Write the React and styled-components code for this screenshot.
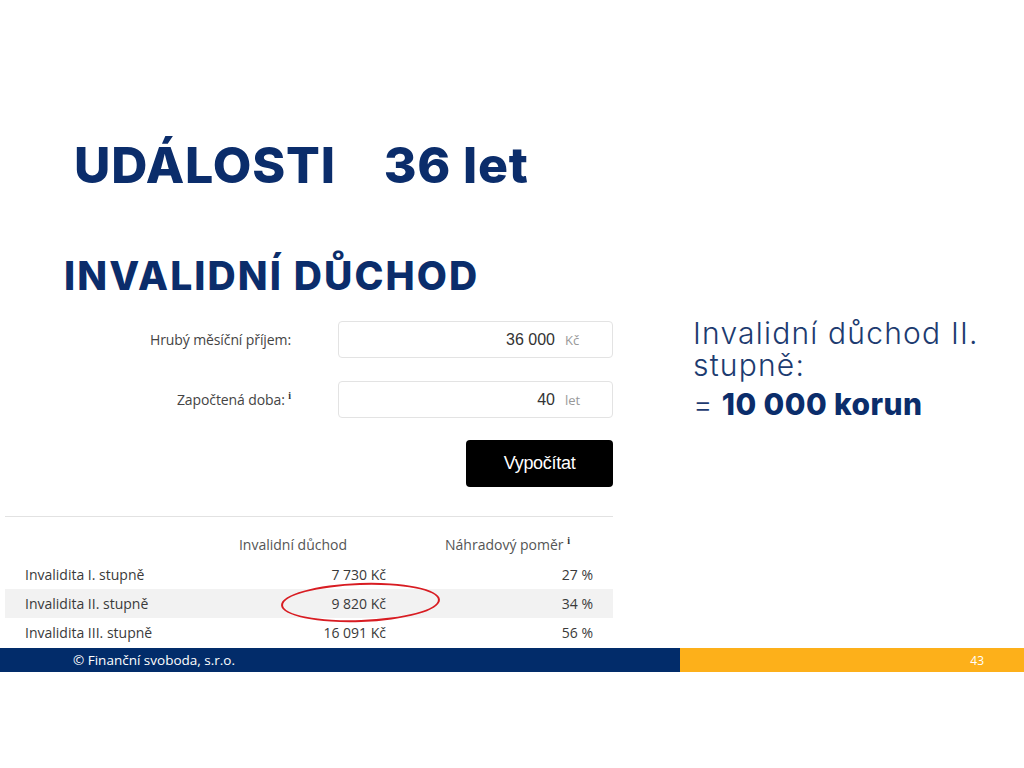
import React from "react";
import styled, { createGlobalStyle } from "styled-components";

const GlobalStyle = createGlobalStyle`
  body {
    margin: 0;
    background: #fff;
  }
`;

const rows = [
  { label: "Invalidita I. stupně", amount: "7 730 Kč", ratio: "27 %" },
  { label: "Invalidita II. stupně", amount: "9 820 Kč", ratio: "34 %", marked: true },
  { label: "Invalidita III. stupně", amount: "16 091 Kč", ratio: "56 %" },
];

const App = () => {
  return (
    <>
      <GlobalStyle />
      <Slide>
        <Title>
          UDÁLOSTI<Gap />36 let
        </Title>
        <Subtitle>INVALIDNÍ DŮCHOD</Subtitle>
        <Main>
          <Calculator>
            <Form>
              <Label>Hrubý měsíční příjem:</Label>
              <Field>
                <Value>36 000</Value>
                <Unit>Kč</Unit>
              </Field>
              <Label>
                Započtená doba: <Info>i</Info>
              </Label>
              <Field>
                <Value>40</Value>
                <Unit>let</Unit>
              </Field>
              <ButtonCell>
                <Button>Vypočítat</Button>
              </ButtonCell>
            </Form>
            <Divider />
            <Table>
              <HeadRow>
                <span />
                <HeadCell $pad={39}>Invalidní důchod</HeadCell>
                <HeadCell $pad={43}>
                  Náhradový poměr <Info>i</Info>
                </HeadCell>
              </HeadRow>
              {rows.map((r) => (
                <Row key={r.label} $striped={r.marked}>
                  <Cell>{r.label}</Cell>
                  <NumCell>
                    {r.amount}
                    {r.marked && <Ring />}
                  </NumCell>
                  <NumCell>{r.ratio}</NumCell>
                </Row>
              ))}
            </Table>
          </Calculator>
          <Result>
            <ResultLine>Invalidní důchod II.</ResultLine>
            <ResultLine>stupně:</ResultLine>
            <ResultSum>
              = <strong>10 000 korun</strong>
            </ResultSum>
          </Result>
        </Main>
        <Footer>
          <FooterLeft>© Finanční svoboda, s.r.o.</FooterLeft>
          <FooterRight>43</FooterRight>
        </Footer>
      </Slide>
    </>
  );
};

const navy = "#0b2d6b";

const Slide = styled.div`
  width: 1024px;
  height: 672px;
  display: flex;
  flex-direction: column;
  background: #fff;
  font-family: Inter, "Open Sans", sans-serif;
`;

const Title = styled.h1`
  margin: 140px 0 0 74px;
  font-size: 50px;
  line-height: 1;
  font-weight: 800;
  color: ${navy};
  letter-spacing: 0.8px;
`;

const Gap = styled.span`
  display: inline-block;
  width: 48px;
`;

const Subtitle = styled.h2`
  margin: 66px 0 0 64px;
  font-size: 39px;
  line-height: 1;
  font-weight: 800;
  color: ${navy};
  letter-spacing: 2.1px;
`;

const Main = styled.div`
  flex: 1;
  display: grid;
  grid-template-columns: 608px 1fr;
  column-gap: 80px;
  padding: 22px 0 0 5px;
`;

const Calculator = styled.div`
  padding-top: 4px;
  display: flex;
  flex-direction: column;
`;

const Form = styled.div`
  display: grid;
  grid-template-columns: 286px 275px;
  column-gap: 47px;
  row-gap: 23px;
  align-items: center;
  font-family: "Open Sans", sans-serif;
`;

const Label = styled.div`
  text-align: right;
  font-size: 14px;
  color: #444;
  letter-spacing: -0.1px;
`;

const Info = styled.sup`
  font-family: "Liberation Serif", serif;
  font-weight: bold;
  font-size: 10px;
  color: #333;
  vertical-align: 6px;
`;

const Field = styled.div`
  height: 37px;
  box-sizing: border-box;
  border: 1px solid #e3e3e3;
  border-radius: 4px;
  display: flex;
  align-items: center;
  justify-content: flex-end;
  gap: 10px;
  padding-right: 31px;
  background: #fff;
`;

const Value = styled.span`
  font-family: "Liberation Sans", Arial, sans-serif;
  font-size: 16px;
  color: #333;
`;

const Unit = styled.span`
  font-family: "Open Sans", sans-serif;
  font-size: 13px;
  color: #999;
  width: 16px;
`;

const ButtonCell = styled.div`
  grid-column: 2;
  display: flex;
  justify-content: flex-end;
  margin-top: -1px;
`;

const Button = styled.button`
  width: 147px;
  height: 47px;
  border: none;
  border-radius: 4px;
  background: #000;
  color: #fff;
  font-family: "Liberation Sans", Arial, sans-serif;
  font-size: 18px;
  letter-spacing: -0.3px;
`;

const Divider = styled.div`
  height: 1px;
  background: #e2e2e2;
  margin-top: 29px;
`;

const Table = styled.div`
  padding-top: 13px;
  font-family: "Open Sans", sans-serif;
  font-size: 14px;
  color: #3a3a3a;
  letter-spacing: 0;
`;

const grid = `
  display: grid;
  grid-template-columns: 195px 186px 227px;
  height: 29px;
  align-items: center;
`;

const HeadRow = styled.div`
  ${grid}
  margin-bottom: 1px;
`;

const HeadCell = styled.div`
  text-align: right;
  padding-right: ${(p) => p.$pad}px;
  color: #555;
`;

const Row = styled.div`
  ${grid}
  background: ${(p) => (p.$striped ? "#f2f2f2" : "transparent")};
`;

const Cell = styled.div`
  padding-left: 20px;
`;

const NumCell = styled.div`
  position: relative;
  text-align: right;
  &:last-child {
    padding-right: 20px;
  }
`;

const Ring = styled.span`
  position: absolute;
  left: 81px;
  top: -11px;
  width: 155px;
  height: 35px;
  border: 2px solid #d81c22;
  border-radius: 50%;
  transform: rotate(-2deg);
`;

const Result = styled.div`
  color: #1d3b70;
  font-size: 30px;
  letter-spacing: 1.2px;
`;

const ResultLine = styled.div`
  font-weight: 300;
  line-height: 32px;
`;

const ResultSum = styled.div`
  margin-top: 7px;
  line-height: 32px;
  font-weight: 300;
  letter-spacing: 0.4px;
  strong {
    font-weight: 800;
    color: ${navy};
  }
`;

const Footer = styled.div`
  display: flex;
  height: 24px;
  font-family: "Open Sans", sans-serif;
  font-size: 13.5px;
  color: #fff;
`;

const FooterLeft = styled.div`
  width: 680px;
  background: #022c6a;
  padding-left: 73px;
  box-sizing: border-box;
  display: flex;
  align-items: center;
`;

const FooterRight = styled.div`
  flex: 1;
  background: #fdb01a;
  display: flex;
  align-items: center;
  justify-content: flex-end;
  padding-right: 40px;
  font-size: 12px;
`;

export default App;
